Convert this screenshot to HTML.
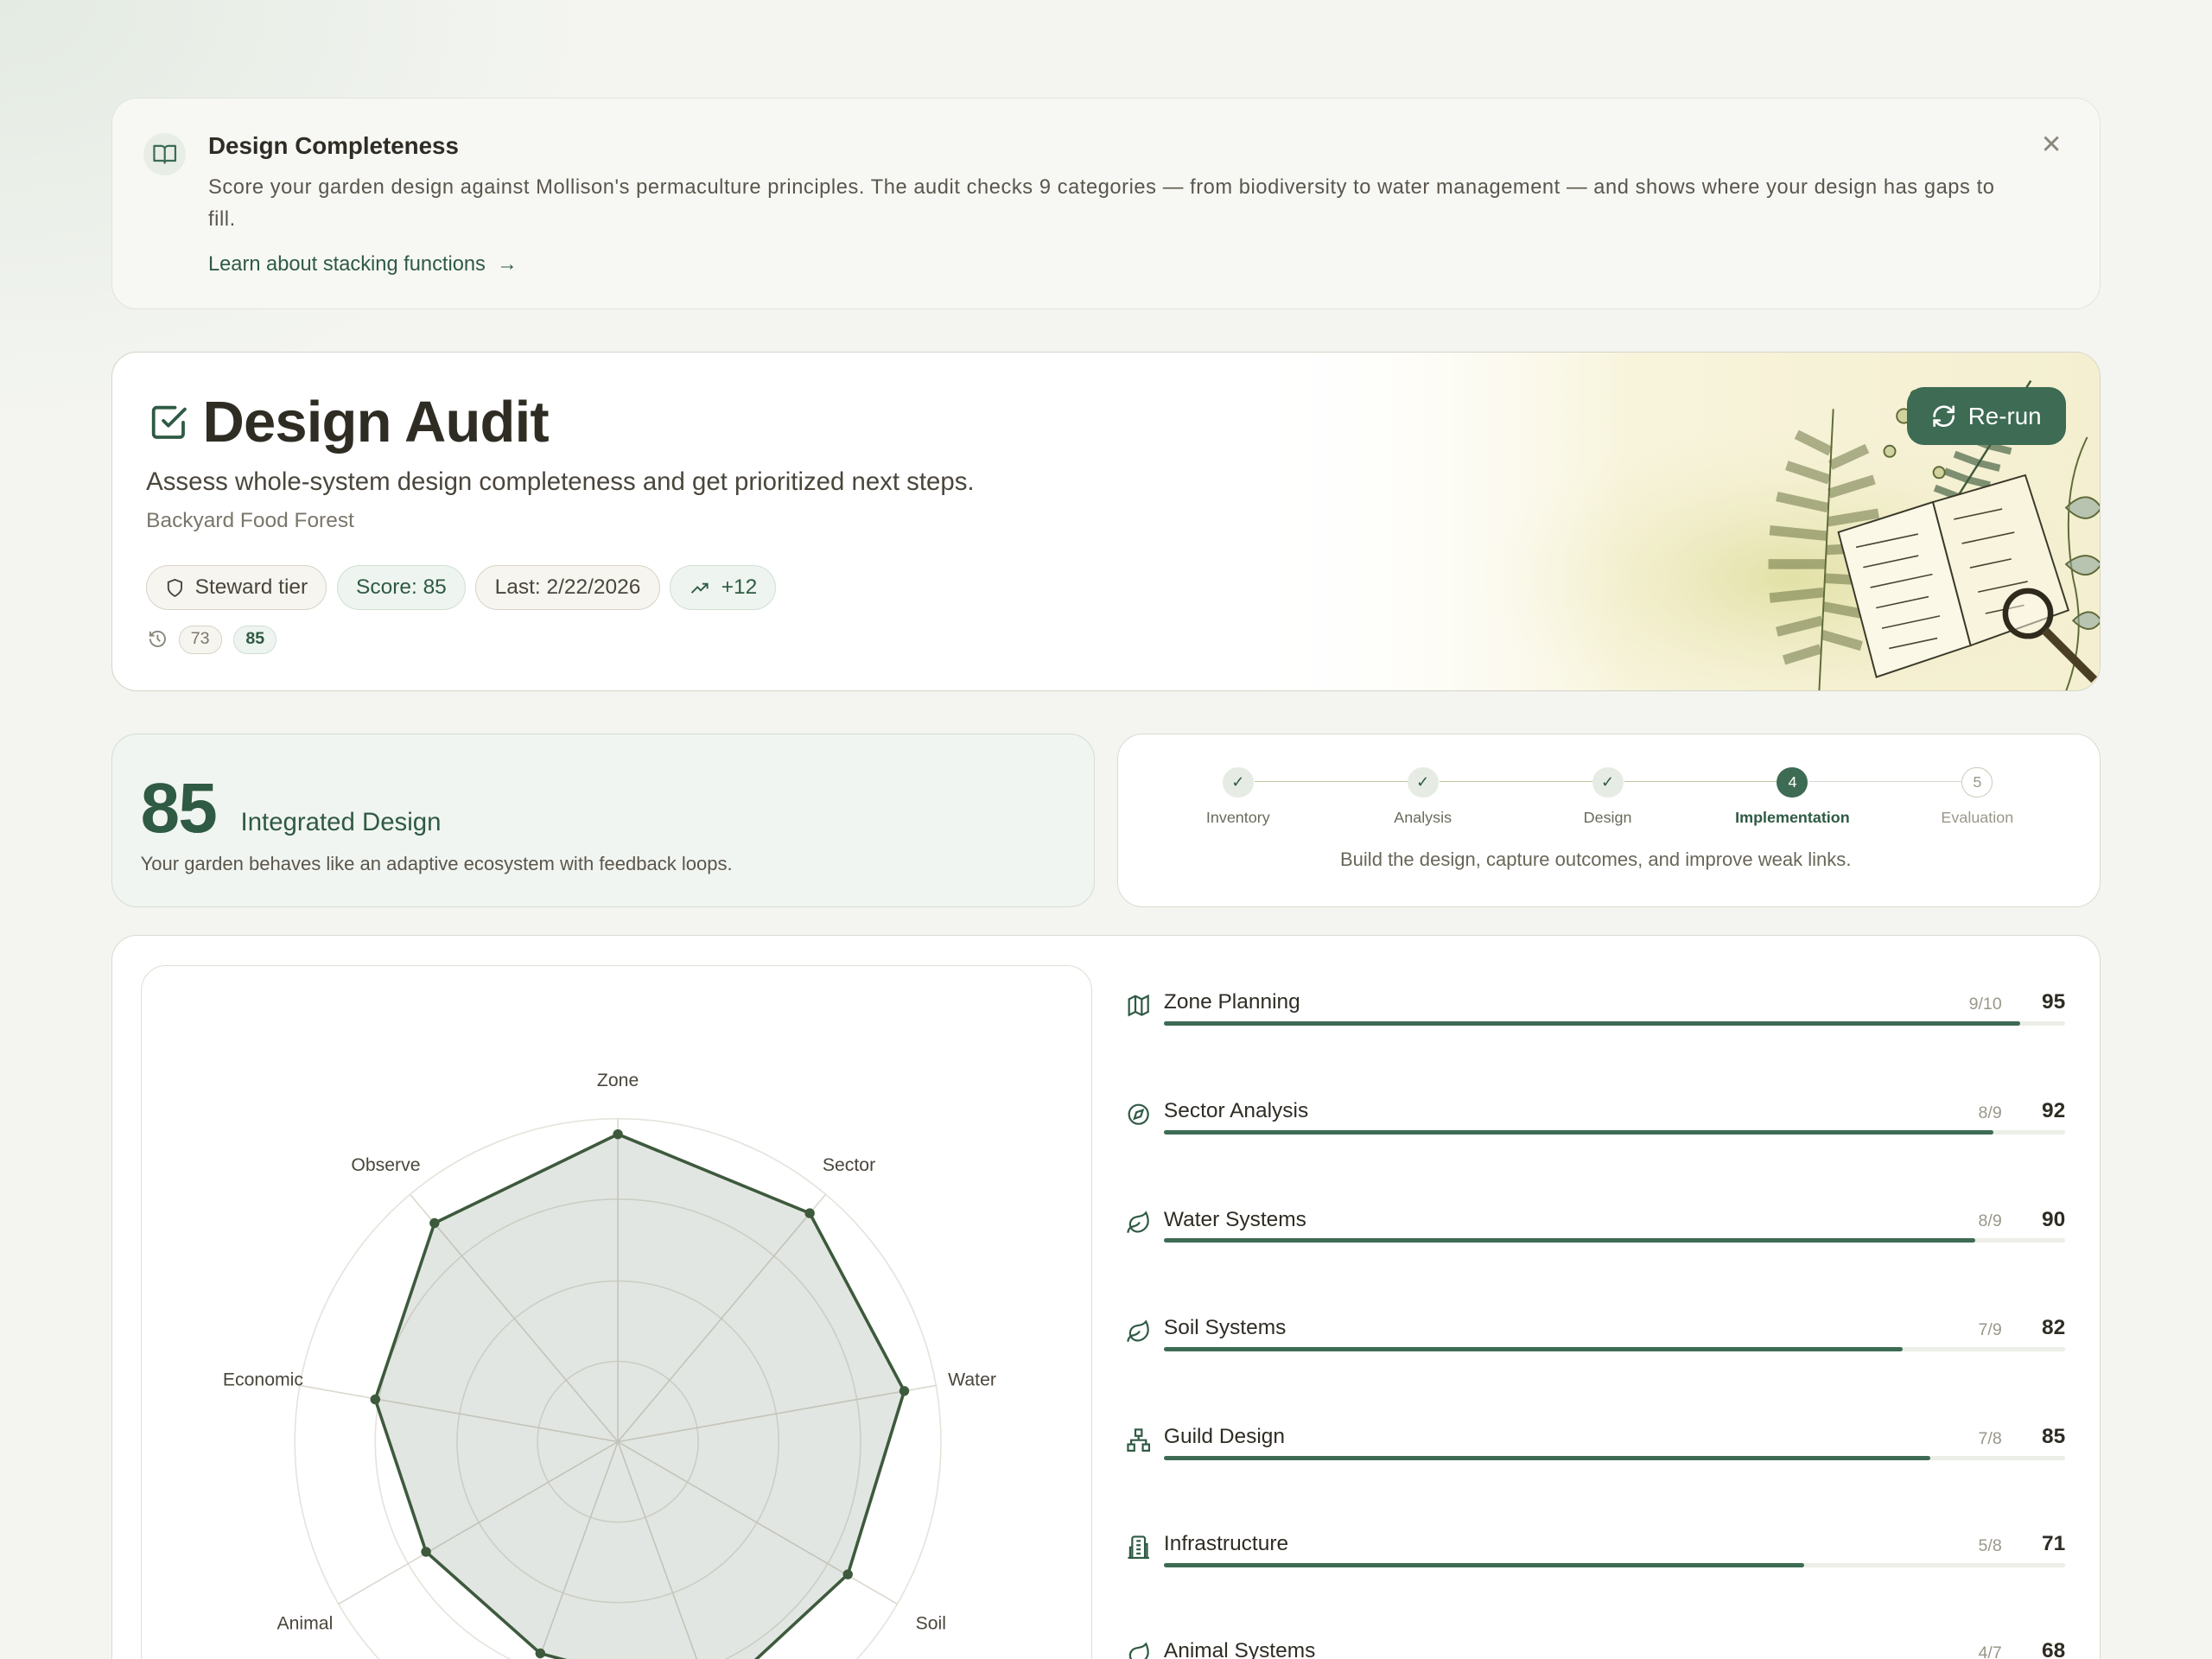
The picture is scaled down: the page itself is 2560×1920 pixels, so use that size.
<!DOCTYPE html>
<html><head><meta charset="utf-8">
<style>
*{box-sizing:border-box;margin:0;padding:0}
html,body{width:2560px;height:1920px;overflow:hidden}
body{background:#f4f5f1;font-family:"Liberation Sans",sans-serif;color:#2f2c24}
#w{zoom:1.632653;width:1568px;height:1176px;position:relative;overflow:hidden;
background:radial-gradient(ellipse 420px 300px at 0 0,#e3ebe2 0%,rgba(244,245,241,0) 100%),#f4f5f1}
.card{position:absolute;background:#fff;border:1px solid #dcdad0;border-radius:18px}
.abs{position:absolute;white-space:nowrap}
.pill{display:inline-flex;align-items:center;gap:7px;height:32px;padding:0 13px;border-radius:16px;border:1px solid #d7d3c6;background:#f6f5f0;font-size:15px;color:#4a463c;margin-right:7px;vertical-align:top}
.pill.g{background:#eef4ef;border-color:#cfe0d4;color:#2f5a44}
.step{position:absolute;text-align:center;width:120px;font-size:11px;color:#6a6a5c}
.dot{width:22px;height:22px;border-radius:50%;margin:0 auto 8px;display:flex;align-items:center;justify-content:center;font-size:11px}
.row{position:absolute;left:798px;width:666px;height:40px}
.row .ic{position:absolute;left:0;top:3px}
.row .nm{position:absolute;left:27px;top:1px;font-size:15px;color:#2f2c24}
.row .fr{position:absolute;right:45px;top:4px;font-size:12px;color:#9a978a}
.row .sc{position:absolute;right:0;top:1px;font-size:15px;font-weight:bold;color:#2f2c24}
.row .bar{position:absolute;left:27px;right:0;top:23px;height:3px;background:#eceee8;border-radius:2px}
.row .bar i{display:block;height:3px;background:#3d6b53;border-radius:2px}
</style></head><body><div id="w">

<div class="card" style="left:79px;top:69px;width:1410px;height:150px;background:#f7f8f4;border-color:#e2e4da">
  <div class="abs" style="left:22px;top:25px;width:30px;height:30px;border-radius:50%;background:#e8ede6"></div>
  <svg class="abs" style="left:28px;top:31px" width="18" height="18" viewBox="0 0 24 24" fill="none" stroke="#3d6b53" stroke-width="1.8" stroke-linejoin="round"><path d="M2 4h7a3 3 0 0 1 3 3v13a2 2 0 0 0-2-2H2zM22 4h-7a3 3 0 0 0-3 3v13a2 2 0 0 1 2-2h8z"/></svg>
  <div class="abs" style="left:68px;top:24px;font-size:17px;font-weight:bold;color:#2f2c24">Design Completeness</div>
  <div class="abs" style="left:68px;top:52px;font-size:14.5px;color:#5a564c;white-space:normal;width:1270px;line-height:23px;letter-spacing:0.35px">Score your garden design against Mollison's permaculture principles. The audit checks 9 categories — from biodiversity to water management — and shows where your design has gaps to fill.</div>
  <div class="abs" style="left:68px;top:110px;font-size:14.5px;color:#2f5a44">Learn about stacking functions &nbsp;→</div>
  <div class="abs" style="left:1367px;top:22px;font-size:18px;color:#8a877c">✕</div>
</div>

<div class="card" style="left:79px;top:249px;width:1410px;height:241px;overflow:hidden;border-color:#d6d3c8">
  <svg class="abs" style="left:800px;top:0" width="610" height="241" viewBox="0 0 610 241">
    <defs><linearGradient id="bg" x1="0" x2="1"><stop offset="0" stop-color="#fff" stop-opacity="0"/><stop offset=".45" stop-color="#f8f4dc"/><stop offset="1" stop-color="#f4efd0"/></linearGradient>
    <radialGradient id="gl" cx=".5" cy=".5" r=".5"><stop offset="0" stop-color="#dcdc98" stop-opacity=".8"/><stop offset="1" stop-color="#f4efd0" stop-opacity="0"/></radialGradient></defs>
    <rect width="610" height="241" fill="url(#bg)"/>
    <ellipse cx="390" cy="160" rx="220" ry="110" fill="url(#gl)"/>
    <g stroke="#5f6a38" stroke-width="1.2" fill="#b8c07a" fill-opacity=".6">
      <path d="M410 240 L420 40" fill="none"/>
      <path d="M418 70 l-24 -12 M417 90 l-30 -10 M416 110 l-36 -8 M415 130 l-40 -4 M414 150 l-40 0 M413 170 l-38 4 M412 190 l-32 8 M411 210 l-26 8 M418 80 l26 -12 M417 100 l32 -10 M416 120 l36 -6 M415 140 l38 -2 M414 160 l36 2 M413 180 l32 6 M412 200 l28 8" stroke-width="7" stroke-opacity=".5"/>
      <path d="M500 115 L560 20" stroke="#3e5a3c" stroke-width="1.5" fill="none"/>
      <path d="M508 102 l-16-6 M515 90 l-16-6 M522 78 l-16-6 M530 66 l-16-6 M538 54 l-14-6 M546 42 l-12-6 M508 102 l14 4 M515 90 l16 4 M522 78 l16 4 M530 66 l16 4 M538 54 l14 4" stroke="#3e5a3c" stroke-width="5" stroke-opacity=".65"/>
      <circle cx="470" cy="45" r="5"/><circle cx="485" cy="60" r="4"/><circle cx="460" cy="70" r="4"/><circle cx="495" cy="85" r="4"/><circle cx="478" cy="30" r="3"/>
      <path d="M600 60 q-20 40 -10 100 q10 40 -5 80" fill="none"/>
      <path d="M585 110 q15 -15 25 0 q-10 15 -25 0z M585 150 q15 -12 25 0 q-10 15 -25 0z M590 190 q12 -12 20 0 q-8 12 -20 0z" fill="#8fa79b"/>
    </g>
    <g transform="rotate(-12 500 150)">
      <path d="M430 112 L500 105 L505 210 L435 218 Z" fill="#fbf8e8" stroke="#3a3a2a" stroke-width="1.2"/>
      <path d="M500 105 L568 100 L578 200 L505 210 Z" fill="#f8f4de" stroke="#3a3a2a" stroke-width="1.2"/>
      <g stroke="#4a4634" stroke-width="1"><path d="M440 125h45M442 140h40M444 155h45M445 170h38M446 185h42M448 200h35M512 120h35M514 138h38M516 156h30M518 174h36M520 190h28"/></g>
    </g>
    <circle cx="558" cy="185" r="16" fill="#fbf8e8" fill-opacity=".5" stroke="#2e2a1c" stroke-width="4"/>
    <path d="M570 197 L605 232" stroke="#4a3f24" stroke-width="6"/>
  </svg>
  <svg class="abs" style="left:26px;top:36px" width="28" height="28" viewBox="0 0 24 24" fill="none" stroke="#2f5a44" stroke-width="2" stroke-linecap="round" stroke-linejoin="round"><path d="M9 11l3 3L22 4"/><path d="M21 12v7a2 2 0 0 1-2 2H5a2 2 0 0 1-2-2V5a2 2 0 0 1 2-2h11"/></svg>
  <div class="abs" style="left:64px;top:26px;font-size:41px;font-weight:bold;color:#2f2c24;letter-spacing:-0.5px">Design Audit</div>
  <div class="abs" style="left:24px;top:82px;font-size:18px;color:#4a463c">Assess whole-system design completeness and get prioritized next steps.</div>
  <div class="abs" style="left:24px;top:111px;font-size:15px;color:#7a766a">Backyard Food Forest</div>
  <div class="abs" style="left:24px;top:151px">
    <span class="pill"><svg width="14" height="14" viewBox="0 0 24 24" fill="none" stroke="#4a463c" stroke-width="2"><path d="M12 22s8-4 8-10V5l-8-3-8 3v7c0 6 8 10 8 10z"/></svg>Steward tier</span><span class="pill g">Score: 85</span><span class="pill">Last: 2/22/2026</span><span class="pill g"><svg width="16" height="14" viewBox="0 0 24 24" fill="none" stroke="#2f5a44" stroke-width="2"><path d="M2 18l7-7 4 4 8-8M15 7h6v6"/></svg>+12</span>
  </div>
  <svg class="abs" style="left:25px;top:196px" width="14" height="14" viewBox="0 0 24 24" fill="none" stroke="#8a877c" stroke-width="2"><path d="M3 12a9 9 0 1 0 3-6.7L3 8M3 3v5h5M12 7v5l3 3"/></svg>
  <div class="abs" style="left:47px;top:194px;height:20px;padding:0 8px;border-radius:10px;border:1px solid #d7d3c6;background:#f6f5f0;font-size:12px;line-height:18px;color:#7a766a">73</div>
  <div class="abs" style="left:86px;top:194px;height:20px;padding:0 8px;border-radius:10px;border:1px solid #cfe0d4;background:#eef4ef;font-size:12px;line-height:18px;color:#2f5a44;font-weight:bold">85</div>
  <div class="abs" style="left:1272px;top:25px;width:113px;height:41px;border-radius:12px;background:#3d6b53;color:#fff;font-size:17px;display:flex;align-items:center;justify-content:center;gap:8px">
    <svg width="18" height="18" viewBox="0 0 24 24" fill="none" stroke="#fff" stroke-width="2.2" stroke-linecap="round"><path d="M21 12a9 9 0 0 1-15.5 6.2L3 16M3 12a9 9 0 0 1 15.5-6.2L21 8M21 3v5h-5M3 21v-5h5"/></svg>Re-run</div>
</div>

<div class="card" style="left:79px;top:520px;width:697px;height:123px;background:#f1f5f1;border-color:#d5ddd3">
  <div class="abs" style="left:20px;top:24px;font-size:50px;font-weight:bold;color:#2f5a44;letter-spacing:-1px">85</div>
  <div class="abs" style="left:91px;top:52px;font-size:18px;color:#2f5a44">Integrated Design</div>
  <div class="abs" style="left:20px;top:84px;font-size:13.5px;color:#5a564c">Your garden behaves like an adaptive ecosystem with feedback loops.</div>
</div>

<div class="card" style="left:792px;top:520px;width:697px;height:123px">
  <div class="abs" style="left:97px;top:33px;width:108px;height:1px;background:#b7c79a"></div>
  <div class="abs" style="left:228px;top:33px;width:108px;height:1px;background:#b7c79a"></div>
  <div class="abs" style="left:359px;top:33px;width:108px;height:1px;background:#b7c79a"></div>
  <div class="abs" style="left:490px;top:33px;width:108px;height:1px;background:#d8d6cc"></div>
  <div class="step" style="left:25px;top:23px"><div class="dot" style="background:#e6ece4;color:#2f5a44">✓</div>Inventory</div>
  <div class="step" style="left:156px;top:23px"><div class="dot" style="background:#e6ece4;color:#2f5a44">✓</div>Analysis</div>
  <div class="step" style="left:287px;top:23px"><div class="dot" style="background:#e6ece4;color:#2f5a44">✓</div>Design</div>
  <div class="step" style="left:418px;top:23px;color:#2f5a44;font-weight:bold"><div class="dot" style="background:#3d6b53;color:#fff;font-weight:normal">4</div>Implementation</div>
  <div class="step" style="left:549px;top:23px;color:#9a978a"><div class="dot" style="border:1px solid #cfcabb;color:#9a978a;background:#fff">5</div>Evaluation</div>
  <div class="abs" style="left:-10px;width:697px;text-align:center;top:81px;font-size:13.5px;color:#6a6658">Build the design, capture outcomes, and improve weak links.</div>
</div>

<div class="card" style="left:79px;top:663px;width:1410px;height:540px"></div>
<div class="card" style="left:100px;top:684px;width:674px;height:520px;border-color:#e0ddd3"></div>
<svg class="abs" style="left:0;top:0" width="1568" height="1176">
  <g fill="none" stroke="#e6e3dc" stroke-width="1">
    <circle cx="438" cy="1022" r="57"/><circle cx="438" cy="1022" r="114"/><circle cx="438" cy="1022" r="172"/><circle cx="438" cy="1022" r="229"/>
  </g>
  <g stroke="#dcd8d0" stroke-width="1">
    <line x1="438" y1="1022" x2="438" y2="793"/><line x1="438" y1="1022" x2="585" y2="847"/><line x1="438" y1="1022" x2="664" y2="982"/><line x1="438" y1="1022" x2="636" y2="1137"/><line x1="438" y1="1022" x2="516" y2="1237"/><line x1="438" y1="1022" x2="360" y2="1237"/><line x1="438" y1="1022" x2="240" y2="1137"/><line x1="438" y1="1022" x2="212" y2="982"/><line x1="438" y1="1022" x2="291" y2="847"/>
  </g>
  <polygon points="438,804 574,860 641,986 601,1116 505,1205 383,1172 302,1100 266,992 308,867" fill="#3d5a3c" fill-opacity=".15" stroke="#3d5a3c" stroke-width="2.2" stroke-linejoin="round"/>
  <g fill="#3d5a3c"><circle cx="438" cy="804" r="3.5"/><circle cx="574" cy="860" r="3.5"/><circle cx="641" cy="986" r="3.5"/><circle cx="601" cy="1116" r="3.5"/><circle cx="383" cy="1172" r="3.5"/><circle cx="302" cy="1100" r="3.5"/><circle cx="266" cy="992" r="3.5"/><circle cx="308" cy="867" r="3.5"/></g>
  <g font-family="Liberation Sans, sans-serif" font-size="13" fill="#4a463c">
    <text x="438" y="770" text-anchor="middle">Zone</text>
    <text x="583" y="830">Sector</text>
    <text x="672" y="982">Water</text>
    <text x="649" y="1155">Soil</text>
    <text x="236" y="1155" text-anchor="end">Animal</text>
    <text x="215" y="982" text-anchor="end">Economic</text>
    <text x="298" y="830" text-anchor="end">Observe</text>
  </g>
</svg>

<div class="row" style="top:701px"><svg class="ic" width="18" height="18" viewBox="0 0 24 24" fill="none" stroke="#2f5a44" stroke-width="1.8"><path d="M3 6l6-3 6 3 6-3v15l-6 3-6-3-6 3zM9 3v15M15 6v15"/></svg><div class="nm">Zone Planning</div><div class="fr">9/10</div><div class="sc">95</div><div class="bar"><i style="width:95%"></i></div></div>
<div class="row" style="top:778px"><svg class="ic" width="18" height="18" viewBox="0 0 24 24" fill="none" stroke="#2f5a44" stroke-width="1.8"><circle cx="12" cy="12" r="9"/><path d="M16 8l-2 6-6 2 2-6z"/></svg><div class="nm">Sector Analysis</div><div class="fr">8/9</div><div class="sc">92</div><div class="bar"><i style="width:92%"></i></div></div>
<div class="row" style="top:855px"><svg class="ic" width="18" height="18" viewBox="0 0 24 24" fill="none" stroke="#2f5a44" stroke-width="1.8"><path d="M11 20A7 7 0 0 1 9.8 6.1C15.5 5 17 4.5 19 2c1 2 2 4.2 2 8 0 5.5-4.8 10-10 10zM2 21c0-3 1.9-5.4 5-6 2.5-.5 5-2 6-4"/></svg><div class="nm">Water Systems</div><div class="fr">8/9</div><div class="sc">90</div><div class="bar"><i style="width:90%"></i></div></div>
<div class="row" style="top:932px"><svg class="ic" width="18" height="18" viewBox="0 0 24 24" fill="none" stroke="#2f5a44" stroke-width="1.8"><path d="M11 20A7 7 0 0 1 9.8 6.1C15.5 5 17 4.5 19 2c1 2 2 4.2 2 8 0 5.5-4.8 10-10 10zM2 21c0-3 1.9-5.4 5-6 2.5-.5 5-2 6-4"/></svg><div class="nm">Soil Systems</div><div class="fr">7/9</div><div class="sc">82</div><div class="bar"><i style="width:82%"></i></div></div>
<div class="row" style="top:1009px"><svg class="ic" width="18" height="18" viewBox="0 0 24 24" fill="none" stroke="#2f5a44" stroke-width="1.8"><rect x="9" y="2" width="6" height="6"/><rect x="2" y="16" width="6" height="6"/><rect x="16" y="16" width="6" height="6"/><path d="M12 8v4M5 16v-4h14v4"/></svg><div class="nm">Guild Design</div><div class="fr">7/8</div><div class="sc">85</div><div class="bar"><i style="width:85%"></i></div></div>
<div class="row" style="top:1085px"><svg class="ic" width="18" height="18" viewBox="0 0 24 24" fill="none" stroke="#2f5a44" stroke-width="1.8"><path d="M6 22V4a2 2 0 0 1 2-2h8a2 2 0 0 1 2 2v18zM2 22h20M6 12H4v10M18 9h2v13M10 6h4M10 10h4M10 14h4M10 18h4"/></svg><div class="nm">Infrastructure</div><div class="fr">5/8</div><div class="sc">71</div><div class="bar"><i style="width:71%"></i></div></div>
<div class="row" style="top:1161px"><svg class="ic" width="18" height="18" viewBox="0 0 24 24" fill="none" stroke="#2f5a44" stroke-width="1.8"><path d="M11 20A7 7 0 0 1 9.8 6.1C15.5 5 17 4.5 19 2c1 2 2 4.2 2 8 0 5.5-4.8 10-10 10z"/></svg><div class="nm">Animal Systems</div><div class="fr">4/7</div><div class="sc">68</div><div class="bar"><i style="width:68%"></i></div></div>

</div></body></html>
